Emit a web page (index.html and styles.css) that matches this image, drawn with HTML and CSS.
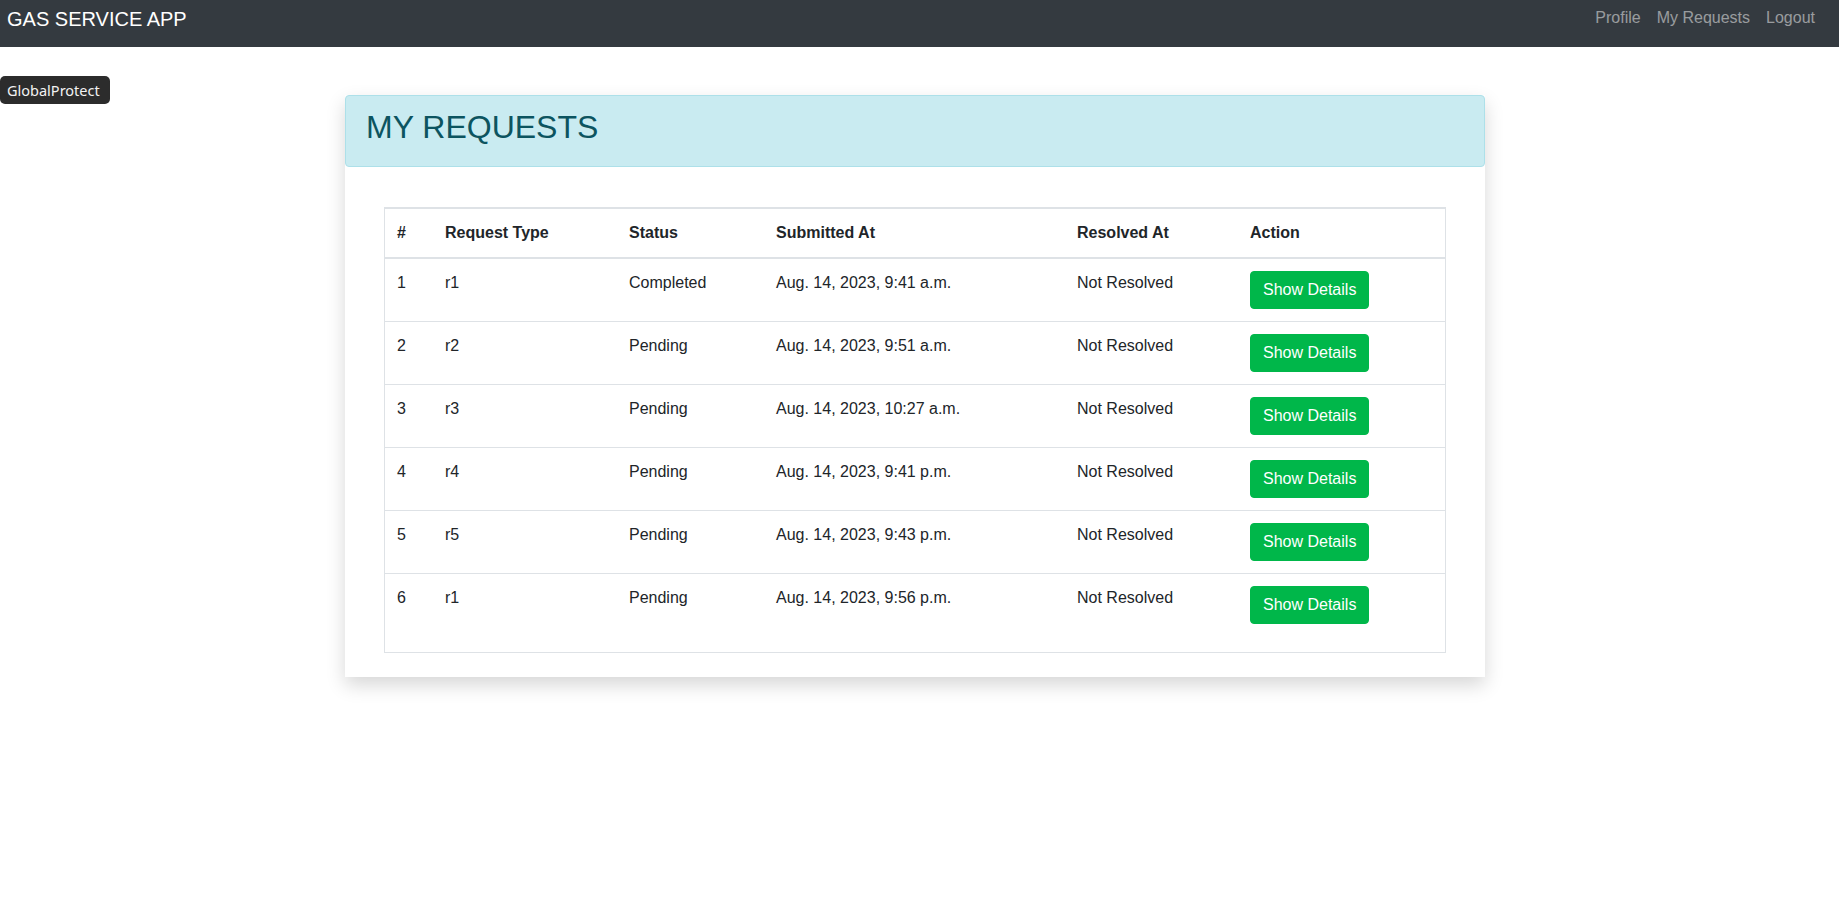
FILE: index.html
```html
<!DOCTYPE html>
<html lang="en">
<head>
<meta charset="utf-8">
<title>Gas Service App</title>
<link rel="stylesheet" href="styles.css">
</head>
<body>
<nav class="navbar">
  <a class="brand" href="#">GAS SERVICE APP</a>
  <ul class="nav-links">
    <li><a href="#">Profile</a></li>
    <li><a href="#">My Requests</a></li>
    <li><a href="#">Logout</a></li>
  </ul>
</nav>
<div class="gp-badge">GlobalProtect</div>
<main class="page">
  <section class="card">
    <div class="card-header"><h2>MY REQUESTS</h2></div>
    <div class="card-body">
      <div class="table-wrap">
        <table class="table">
          <colgroup>
            <col class="c1"><col class="c2"><col class="c3"><col class="c4"><col class="c5"><col class="c6">
          </colgroup>
          <thead>
            <tr><th>#</th><th>Request Type</th><th>Status</th><th>Submitted At</th><th>Resolved At</th><th>Action</th></tr>
          </thead>
          <tbody>
            <tr><td>1</td><td>r1</td><td>Completed</td><td>Aug. 14, 2023, 9:41 a.m.</td><td>Not Resolved</td><td><button class="btn">Show Details</button></td></tr>
            <tr><td>2</td><td>r2</td><td>Pending</td><td>Aug. 14, 2023, 9:51 a.m.</td><td>Not Resolved</td><td><button class="btn">Show Details</button></td></tr>
            <tr><td>3</td><td>r3</td><td>Pending</td><td>Aug. 14, 2023, 10:27 a.m.</td><td>Not Resolved</td><td><button class="btn">Show Details</button></td></tr>
            <tr><td>4</td><td>r4</td><td>Pending</td><td>Aug. 14, 2023, 9:41 p.m.</td><td>Not Resolved</td><td><button class="btn">Show Details</button></td></tr>
            <tr><td>5</td><td>r5</td><td>Pending</td><td>Aug. 14, 2023, 9:43 p.m.</td><td>Not Resolved</td><td><button class="btn">Show Details</button></td></tr>
            <tr><td>6</td><td>r1</td><td>Pending</td><td>Aug. 14, 2023, 9:56 p.m.</td><td>Not Resolved</td><td><button class="btn">Show Details</button></td></tr>
          </tbody>
        </table>
      </div>
    </div>
  </section>
</main>
</body>
</html>
```
FILE: styles.css
```css
* { box-sizing: border-box; }
html, body { margin: 0; padding: 0; }
body {
  font-family: "Liberation Sans", Arial, sans-serif;
  font-size: 16px;
  line-height: 24px;
  color: #212529;
  background: #fff;
}
.navbar {
  height: 47px;
  background: #343a40;
  display: flex;
  align-items: flex-start;
  justify-content: space-between;
  padding: 4px 16px 0 7px;
}
.brand {
  color: #fff;
  font-size: 20px;
  line-height: 30px;
  text-decoration: none;
}
.nav-links {
  list-style: none;
  margin: 0;
  padding: 0;
  display: flex;
  padding-top: 2px;
}
.nav-links a {
  display: block;
  padding: 0 8px;
  line-height: 24px;
  color: rgba(255,255,255,.5);
  text-decoration: none;
}
.gp-badge {
  position: absolute;
  top: 76px;
  left: 0;
  width: 110px;
  height: 28px;
  background: #2c2c2c;
  color: #f2f2f2;
  border-radius: 5px;
  font-family: "Noto Sans", "DejaVu Sans", sans-serif;
  font-size: 14.5px;
  line-height: 28px;
  padding-left: 7px;
  white-space: nowrap;
}
.page {
  display: flex;
  justify-content: center;
  padding: 48px 9px 40px 0;
}
.card {
  width: 1140px;
  background: #fff;
  box-shadow: 0 8px 18px rgba(0,0,0,.16);
}
.card-header {
  background: #c9ebf1;
  border: 1px solid #ade0e9;
  border-radius: 4px;
  padding: 12px 20px 12px;
}
.card-header h2 {
  margin: 0 0 8px;
  font-size: 32px;
  line-height: 38.4px;
  font-weight: 400;
  color: #0c5460;
}
.card-body {
  padding: 40px 39px 24px;
}
.table-wrap {
  border: 1px solid #dee2e6;
}
.table {
  width: 100%;
  border-collapse: collapse;
  table-layout: fixed;
  margin-bottom: 16px;
}
.c1 { width: 48px; }
.c2 { width: 184px; }
.c3 { width: 147px; }
.c4 { width: 301px; }
.c5 { width: 173px; }
.c6 { width: 207px; }
.table th, .table td {
  padding: 12px;
  text-align: left;
  vertical-align: top;
  border-top: 1px solid #dee2e6;
}
.table th {
  font-weight: 700;
  border-bottom: 2px solid #dee2e6;
}
.btn {
  font-family: "Liberation Sans", Arial, sans-serif;
  font-size: 16px;
  line-height: 24px;
  padding: 6px 12px;
  border: 1px solid #00b74a;
  background: #00b74a;
  color: #fff;
  border-radius: 4px;
  cursor: pointer;
}
```
